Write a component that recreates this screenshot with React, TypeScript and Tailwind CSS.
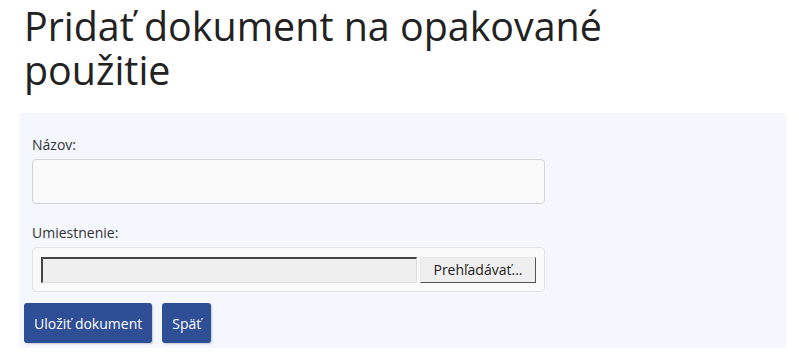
import React from "react";

export default function App() {
  return (
    <div className="w-[799px] h-[363px] bg-white font-['Open_Sans',sans-serif] text-[#333]">
      <h1 className="ml-[24px] pt-[4px] w-[680px] text-[39.4px] leading-[44px] font-normal text-[#222]">
        Pridať dokument na opakované použitie
      </h1>
      <div className="ml-[19px] mt-[21px] w-[767px] h-[235px] bg-[#f4f7fe] rounded-[4px] px-[5px] pt-[22px]">
        <div className="px-[8px]">
          <label className="block text-[14px] leading-[20px] text-[#333]">Názov:</label>
          <input
            type="text"
            className="mt-[4px] block w-[513px] h-[45px] bg-[#fafafa] border border-[#d4d4d4] rounded-[4px] outline-none"
          />
          <label className="block mt-[19px] text-[14px] leading-[20px] text-[#333]">Umiestnenie:</label>
          <div className="mt-[4px] w-[513px] h-[45px] bg-[#fafafa] border border-[#e2e2e2] rounded-[4px] flex items-center pl-[8px]">
            <div className="w-[376px] h-[26px] bg-[#efefef] border-t-2 border-l-2 border-t-[#444] border-l-[#444] border-b border-r border-b-[#ddd] border-r-[#ddd]" />
            <div className="ml-[3px] w-[116px] h-[26px] bg-[#efefef] border-t border-l border-t-[#e8e8e8] border-l-[#e8e8e8] border-b border-r border-b-[#555] border-r-[#555] flex items-center justify-center text-[14px] text-[#222]">
              Prehľadávať...
            </div>
          </div>
        </div>
        <div className="mt-[11px] flex gap-[10px]">
          <button className="h-[40px] px-[10px] bg-[#2e4e95] text-white text-[14px] rounded-[3px] shadow-[1px_1px_2px_rgba(0,0,0,0.2)]">
            Uložiť dokument
          </button>
          <button className="h-[40px] px-[10px] bg-[#2e4e95] text-white text-[14px] rounded-[3px] shadow-[1px_1px_2px_rgba(0,0,0,0.2)]">
            Späť
          </button>
        </div>
      </div>
    </div>
  );
}
